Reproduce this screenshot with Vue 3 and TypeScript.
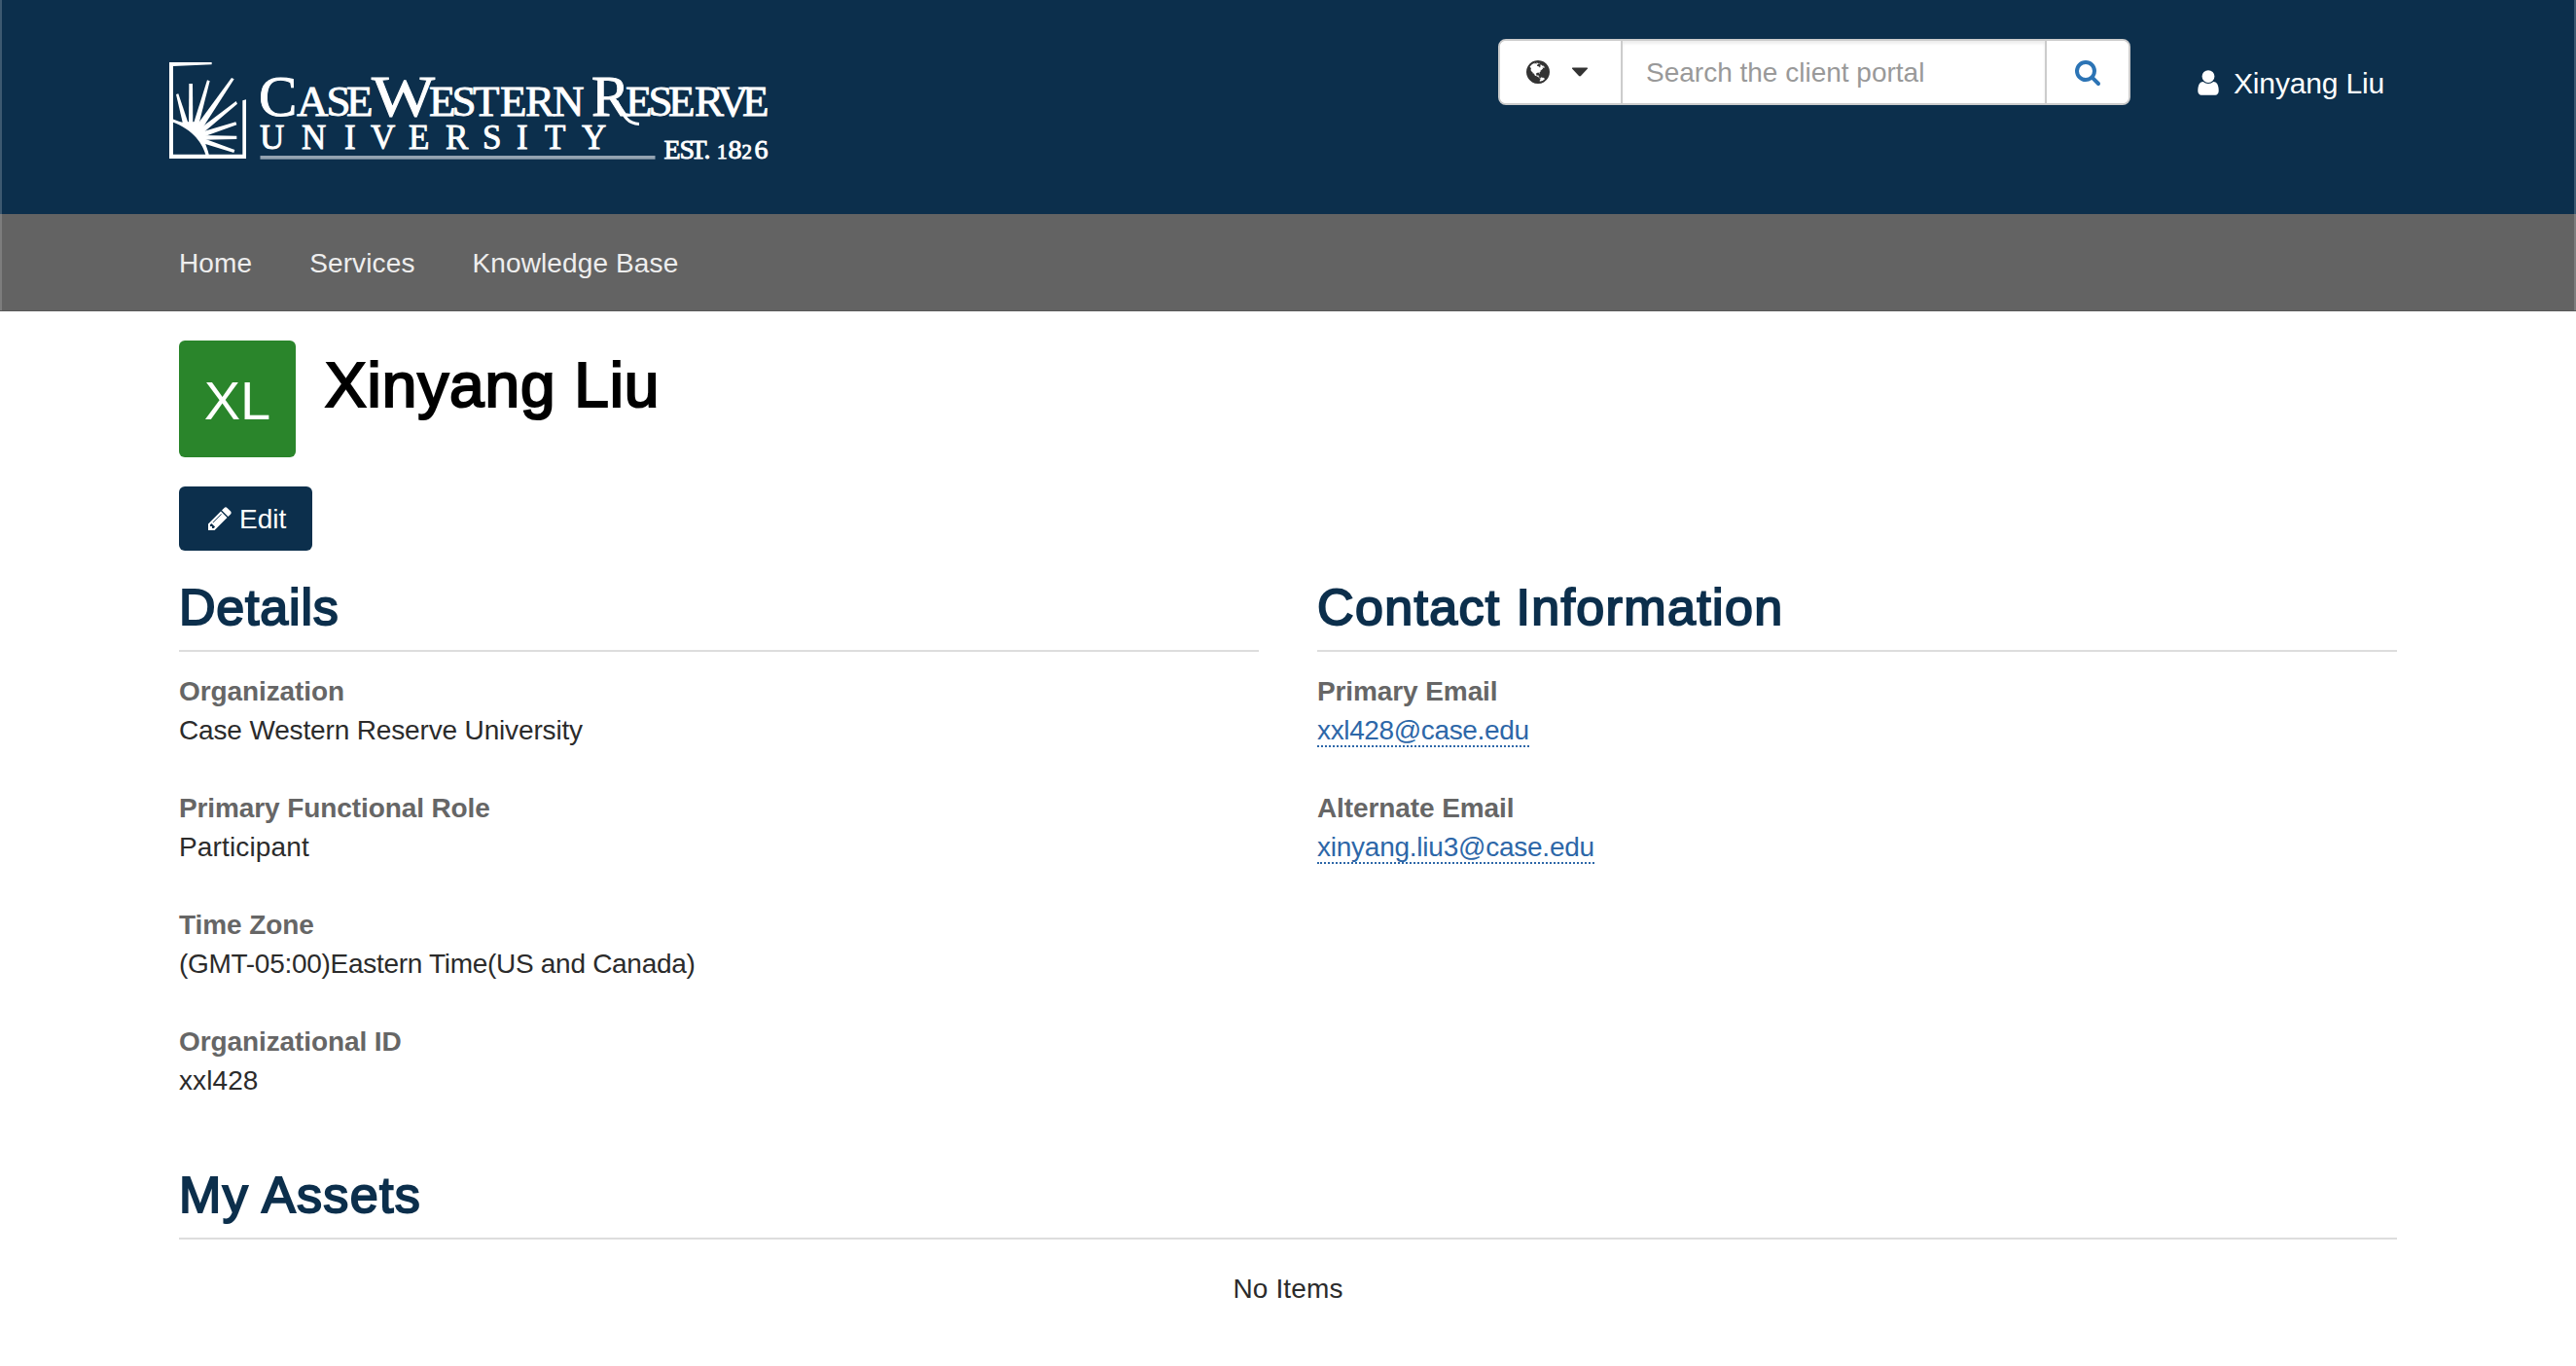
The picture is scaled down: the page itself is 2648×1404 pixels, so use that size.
<script setup lang="ts">
interface Field {
  label: string
  value: string
  spacing?: string
}

const navLinks: string[] = ['Home', 'Services', 'Knowledge Base']

const details: Field[] = [
  { label: 'Organization', value: 'Case Western Reserve University', spacing: '-0.15px' },
  { label: 'Primary Functional Role', value: 'Participant', spacing: '0.15px' },
  { label: 'Time Zone', value: '(GMT-05:00)Eastern Time(US and Canada)', spacing: '-0.29px' },
  { label: 'Organizational ID', value: 'xxl428', spacing: '0.1px' },
]

const contacts: Field[] = [
  { label: 'Primary Email', value: 'xxl428@case.edu', spacing: '-0.36px' },
  { label: 'Alternate Email', value: 'xinyang.liu3@case.edu', spacing: '-0.24px' },
]
</script>

<template>
  <div class="page">
    <header class="masthead">
      <svg class="logo" width="620" height="108" viewBox="0 0 620 108" aria-label="Case Western Reserve University">
        <g transform="translate(-14 -14) scale(0.33333)" fill="#fff">
          <path d="M42 42 L173 42 L173 49 L54 54 L54 326 L268 326 L268 160 L279 157 L279 339 L42 339 Z" />
          <path d="M63 141 L70 139 L104 240 L86 240 Z" />
          <path d="M103 108 L114 108 L115 245 L102 245 Z" />
          <path d="M159 97 L167 100 L130 245 L114 240 Z" />
          <path d="M234 90 L242 94 L140 252 L124 240 Z" />
          <path d="M248 162 L252 170 L144 262 L132 250 Z" />
          <path d="M247 226 L250 235 L146 272 L138 258 Z" />
          <path d="M250 269 L250 279 L146 281 L144 267 Z" />
          <path d="M244 312 L241 321 L146 292 L146 276 Z" />
          <path d="M50 216 C72 224 84 230 92 226 L124 226 L144 250 L150 282 C155 300 162 314 165 330 L155 330 C146 296 118 250 50 226 Z" />
        </g>
        <g class="wordmark" transform="translate(-174 -64)">
          <text class="small" y="119.300"><tspan class="cap" x="266">C</tspan><tspan x="305 335.500 356">ASE</tspan><tspan class="cap" x="382" textLength="65" lengthAdjust="spacingAndGlyphs">W</tspan><tspan x="441 464.500 486 514 540 568">ESTERN</tspan><tspan class="cap" x="608">R</tspan><tspan x="643 666.500 687 714 737 763">ESERVE</tspan></text>
          <path d="M634 104 C641 118 644 127 657 127.500" fill="none" stroke="#fff" stroke-width="3.200" />
          <text class="uni" y="152.500" x="267 310 354 381 420 458 496 531 560 598">UNIVERSITY</text>
          <rect x="267.500" y="160" width="406" height="3.700" fill="#94a3b1" />
          <text class="est" y="163"><tspan x="682.500 698.500 709.500 723.500">EST.</tspan><tspan class="tiny" x="737">1</tspan><tspan x="748.500">8</tspan><tspan class="tiny" x="762.500">2</tspan><tspan x="775.500">6</tspan></text>
        </g>
      </svg>

      <div class="tools">
        <form class="search" @submit.prevent>
          <button class="scope" type="button" aria-label="Search scope">
            <svg width="28" height="28" viewBox="0 0 1792 1792" fill="#333">
              <path d="M896 128q209 0 385.500 103t279.500 279.500 103 385.500-103 385.500-279.500 279.500-385.500 103-385.500-103-279.500-279.500-103-385.500 103-385.500 279.500-279.500 385.500-103zm274 521q-2 1-9.500 9.500t-13.500 9.500q2 0 4.500-5t5-11 3.500-7q6-7 22-15 14-6 52-12 34-8 51 11-2-2 9.500-13t14.500-12q3-2 15-4.500t15-7.500l2-22q-12 1-17.500-7t-6.500-21q0 2-6 8 0-7-4.500-8t-11.500 1-9 1q-10-3-15-7.500t-8-16.500-4-15q-2-5-9.500-11t-9.500-10q-1-2-2.500-5.500t-3-6.500-4-5.500-5.500-2.500-7 5-7.500 10-4.500 5q-3-2-6-1.500t-4.500 1-4.500 3-5 3.500q-3 2-8.500 3t-8.500 2q15-5-1-11-10-4-16-3 9-4 7.500-12t-8.500-14h5q-1-4-8.500-8.500t-17.500-8.500-13-6q-8-5-34-9.500t-33-.5q-5 6-4.500 10.500t4 14 3.500 12.500q1 6-5.500 13t-6.500 12q0 7 14 15.500t10 21.500q-3 8-16 16t-16 12q-5 8-1.500 18.500t10.500 16.500q2 2 1.500 4t-3.500 4.500-5.500 4-6.500 3.500l-3 2q-11 5-20.500-6t-13.500-26q-7-25-16-30-23-8-29 1-5-13-41-26-25-9-58-4 6-1 0-15-7-15-19-12 3-6 4-17.500t1-13.500q3-13 12-23 1-1 7-8.500t9.500-13.500.5-6q35 4 50-11 5-5 11.500-17t10.500-17q9-6 14-5.500t14.500 5.500 14.500 5q14 1 15.500-11t-7.500-20q12 1 3-17-4-7-8-9-12-4-27 5-8 4 2 8-1-1-9.500 10.500t-16.500 17.500-16-5q-1-1-5.500-13.500t-9.500-13.500q-8 0-16 15 3-8-11-15t-24-8q19-12-8-27-7-4-20.500-5t-19.500 4q-5 7-5.500 11.500t5 8 10.500 5.500 11.500 4 8.500 3q14 10 8 14-2 1-8.500 3.500t-11.500 4.500-6 4q-3 4 0 14t-2 14q-5-5-9-17.500t-7-16.500q7 9-25 6l-10-1q-4 0-16 2t-20.500 1-13.500-8q-4-8 0-20 1-4 4-2-4-3-11-9.500t-10-8.500q-46 15-94 41 6 1 12-1 5-2 13-6.500t10-5.500q34-14 42-7l5-5q14 16 20 25-7-4-30-1-20 6-22 12 7 12 5 18-4-3-11.500-10t-14.500-11-15-5q-16 0-22 1-146 80-235 222 7 7 12 8 4 1 5 9t2.500 11 11.500-3q9 8 3 19 1-1 44 27 19 17 21 21 3 11-10 18-1-2-9-9t-9-4q-3 5 .5 18.500t10.500 12.500q-7 0-9.500 16t-2.500 35.500-1 23.500l2 1q-3 12 5.500 34.500t21.500 19.500q-13 3 20 43 6 8 8 9 3 2 12 7.500t15 10 10 10.500q4 5 10 22.500t14 23.500q-2 6 9.500 20t10.500 23q-1 0-2.500 1t-2.500 1q3 7 15.500 14t15.500 13q1 3 2 10t3 11 8 2q2-20-24-62-15-25-17-29-3-5-5.500-15.500t-4.500-14.500q2 0 6 1.500t8.500 3.500 7.500 4 2 3q-3 7 2 17.500t12 18.500 17 19 12 13q6 6 14 19.500t0 13.500q9 0 20 10.500t17 19.500q5 8 8 26t5 24q2 7 8.500 13.500t12.500 9.500l16 8 13 7q5 2 18.500 10.500t21.500 11.500q10 4 16 4t14.500-2.500 13.500-3.500q15-2 29 15t21 21q36 19 55 11-2 1 .5 7.500t8 15.500 9 14.500 5.500 8.500q5 6 18 15t18 15q6-4 7-9-3 8 7 20t18 10q14-3 14-32-31 15-49-18 0-1-2.500-5.500t-4-8.500-2.500-8.500 0-7.500 5-3q9 0 10-3.500t-2-12.500-4-13q-1-8-11-20t-12-15q-5 9-16 8t-16-9q0 1-1.500 5.500t-1.500 6.500q-13 0-15-1 1-3 2.500-17.500t3.500-22.500q1-4 5.500-12t7.500-14.500 4-12.500-4.500-9.500-17.500-2.500q-19 1-26 20-1 3-3 10.500t-5 11.500-9 7q-7 3-24 2t-24-5q-13-8-22.500-29t-9.500-37q0-10 2.500-26.500t3-25-5.500-24.500q3-2 9-9.500t10-10.500q2-1 4.500-1.500t4.500 0 4-1.500 3-6q-1-1-4-3-3-3-4-3 7 3 28.500-1.500t27.500 1.500q15 11 22-2 0-1-2.500-9.500t-.5-13.500q5 27 29 9 3 3 15.500 5t17.500 5q3 2 7 5.500t5.500 4.500 5-.5 8.500-6.500q10 14 12 24 11 40 19 44 7 3 11 2t4.500-9.500 0-14-1.500-12.500l-1-8v-18l-1-8q-15-3-18.500-12t1.500-18.500 15-18.500q1-1 8-3.500t15.500-6.500 12.500-8q21-19 15-35 7 0 11-9-1 0-5-3t-7.500-5-4.500-2q9-5 2-16 5-3 7.500-11t7.500-10q9 12 21 2 7-8 1-16 5-7 20.500-10.500t18.500-9.500q7 2 8-2t1-12 3-12q4-5 15-9t13-5l17-11q3-4 0-4 18 2 31-11 10-11-6-20 3-6-3-9.500t-15-5.500q3-1 11.500-.5t10.500-1.500q15-10-7-16-17-5-43 12zm-163 877q206-36 351-189-3-3-12.500-4.500t-12.500-3.500q-18-7-24-8 1-7-2.500-13t-8-9-12.500-8-11-7q-2-2-7-6t-7-5.500-7.500-4.500-8.500-2-10 1l-3 1q-3 1-5.500 2.500t-5.500 3-4 3 0 2.500q-21-17-36-22-5-1-11-5.500t-10.500-7-10-1.500-11.500 7q-5 5-6 15t-2 13q-7-5 0-17.500t2-18.500q-3-6-10.500-4.500t-12 4.500-11.500 8.500-9 6.500-8.500 5.500-8.500 7.500q-3 4-6 12t-5 11q-2-4-11.500-6.500t-9.500-5.500q2 10 4 35t5 38q7 31-12 48-27 25-29 40-4 22 12 26 0 7-8 20.500t-7 21.500q0 6 2 16z" />
            </svg>
            <svg class="caret" width="18" height="10" viewBox="0 0 18 10" fill="#333">
              <path d="M1.500 .5 H16.500 Q17.600 .7 16.800 1.800 L10 9 Q9 9.800 8 9 L1.200 1.800 Q.4 .7 1.500 .5 Z" />
            </svg>
          </button>
          <input class="query" type="text" placeholder="Search the client portal" />
          <button class="go" type="submit" aria-label="Search">
            <svg width="28" height="28" viewBox="0 0 1792 1792" fill="#2c74b5">
              <path d="M1216 832q0-185-131.500-316.500t-316.500-131.500-316.500 131.500-131.500 316.500 131.500 316.500 316.500 131.500 316.500-131.500 131.500-316.500zm512 832q0 52-38 90t-90 38q-54 0-90-38l-343-342q-179 124-399 124-143 0-273.500-55.500t-225-150-150-225-55.500-273.500 55.500-273.500 150-225 225-150 273.500-55.500 273.500 55.500 225 150 150 225 55.500 273.500q0 220-124 399l343 343q37 37 37 90z" />
            </svg>
          </button>
        </form>
        <a class="user">
          <svg width="30" height="30" viewBox="0 0 1792 1792" fill="#fff">
            <path d="M1536 1399q0 109-62.500 187t-150.500 78h-854q-88 0-150.500-78t-62.500-187q0-85 8.500-160.500t31.500-152 58.500-131 94-89 134.500-34.500q131 128 313 128t313-128q76 0 134.500 34.500t94 89 58.500 131 31.500 152 8.500 160.500zm-256-887q0 159-112.500 271.500t-271.500 112.500-271.500-112.500-112.500-271.500 112.500-271.500 271.500-112.500 271.500 112.500 112.500 271.500z" />
          </svg>
          <span>Xinyang Liu</span>
        </a>
      </div>
    </header>

    <nav class="nav">
      <a v-for="link in navLinks" :key="link">{{ link }}</a>
    </nav>

    <main class="content">
      <div class="profile">
        <div class="avatar">XL</div>
        <h1>Xinyang Liu</h1>
      </div>
      <button class="edit" type="button">
        <svg width="28" height="28" viewBox="0 0 1792 1792" fill="#fff">
          <path d="M491 1536l91-91-235-235-91 91v107h128v128h107zm523-928q0-22-22-22-10 0-17 7l-542 542q-7 7-7 17 0 22 22 22 10 0 17-7l542-542q7-7 7-17zm-54-192l416 416-832 832h-416v-416zm683 96q0 53-37 90l-166 166-416-416 166-165q36-38 90-38 53 0 91 38l235 234q37 39 37 91z" />
        </svg>
        <span>Edit</span>
      </button>

      <div class="columns">
        <section>
          <h2 class="tight">Details</h2>
          <dl>
            <div v-for="f in details" :key="f.label" class="field">
              <dt>{{ f.label }}</dt>
              <dd :style="{ letterSpacing: f.spacing }">{{ f.value }}</dd>
            </div>
          </dl>
        </section>
        <section>
          <h2>Contact Information</h2>
          <dl>
            <div v-for="f in contacts" :key="f.label" class="field">
              <dt>{{ f.label }}</dt>
              <dd><a class="mail" :style="{ letterSpacing: f.spacing }">{{ f.value }}</a></dd>
            </div>
          </dl>
        </section>
      </div>

      <section class="assets">
        <h2>My Assets</h2>
        <p>No Items</p>
      </section>
    </main>
  </div>
</template>

<style>
body {
  margin: 0;
  background: #fff;
}
</style>

<style scoped>
.page {
  height: 1404px;
  overflow: hidden;
  background: #fff;
  color: #2b2b2b;
  font: 28px/40px "Liberation Sans", Arial, sans-serif;
}

.page * {
  box-sizing: border-box;
}

.masthead {
  display: flex;
  justify-content: space-between;
  align-items: flex-start;
  height: 220px;
  padding: 0 184px 0 174px;
  background: #0c2f4c;
  box-shadow: inset -2px 0 #3d5970, inset 2px 0 #3d5970;
}

.logo {
  display: block;
  margin-top: 64px;
  overflow: visible;
}

.wordmark {
  fill: #fff;
  font-family: "Liberation Serif", serif;
}

.wordmark text {
  stroke: #fff;
  stroke-width: 0.9px;
}

.wordmark .small {
  font-size: 45px;
}

.wordmark .cap {
  font-size: 59px;
}

.wordmark .uni {
  font-size: 35px;
}

.wordmark .est {
  font-size: 28px;
}

.wordmark .tiny {
  font-size: 21px;
}

.tools {
  display: flex;
  padding-top: 40px;
}

.search {
  display: flex;
  width: 650px;
  height: 68px;
  overflow: hidden;
  border: 2px solid #ccc;
  border-radius: 8px;
  background: #fff;
}

.search button {
  display: flex;
  align-items: center;
  padding: 0;
  border: 0;
  background: #fff;
}

.search .scope {
  width: 126px;
  flex: none;
  border-right: 2px solid #ccc;
  padding-left: 25px;
}

.caret {
  margin-left: 20px;
}

.query {
  flex: 1;
  min-width: 0;
  padding: 2px 24px 0;
  border: 0;
  outline: 0;
  background: #fff;
  box-shadow: inset 0 3px 3px rgba(0, 0, 0, 0.07);
  font: inherit;
}

.query::placeholder {
  color: #999;
  opacity: 1;
}

.search .go {
  width: 86px;
  flex: none;
  justify-content: center;
  border-left: 2px solid #ccc;
}

.user {
  display: flex;
  gap: 11px;
  width: 274px;
  padding: 26px 0 0 65px;
  color: #fff;
  font-size: 30px;
  letter-spacing: -0.15px;
  white-space: nowrap;
}

.user svg {
  margin-top: 4px;
}

.nav {
  display: flex;
  gap: 59px;
  height: 100px;
  padding: 31px 184px 0;
  border-bottom: 1px solid #5a5a5a;
  background: #636363;
  box-shadow: inset -2px 0 #7d7d7d, inset 2px 0 #7d7d7d;
  color: #eee;
  letter-spacing: 0.12px;
}

.content {
  padding: 30px 184px 0;
}

.profile {
  display: flex;
  gap: 30px;
}

.avatar {
  width: 120px;
  height: 120px;
  border-radius: 6px;
  background: #2a852b;
  color: #fff;
  font-size: 56px;
  line-height: 124px;
  text-align: center;
}

h1,
h2,
dl,
dd,
p {
  margin: 0;
}

h1 {
  padding-top: 10px;
  color: #000;
  font-size: 64px;
  font-weight: 400;
  line-height: 72px;
  letter-spacing: 0.9px;
  -webkit-text-stroke: 2.2px #000;
}

.edit {
  display: flex;
  align-items: center;
  gap: 6px;
  width: 137px;
  height: 66px;
  margin-top: 30px;
  padding: 0 0 0 28px;
  border: 0;
  border-radius: 6px;
  background: #0c2f4c;
  color: #fff;
  font: inherit;
}

.edit span {
  padding-top: 2px;
}

.columns {
  display: grid;
  grid-template-columns: 1fr 1fr;
  gap: 60px;
}

h2 {
  height: 104px;
  padding-top: 28px;
  border-bottom: 2px solid #ddd;
  color: #0c2f4c;
  font-size: 52px;
  font-weight: 400;
  line-height: 60px;
  letter-spacing: 1.35px;
  -webkit-text-stroke: 2px #0c2f4c;
}

h2.tight {
  letter-spacing: 0.8px;
}

dl {
  height: 500px;
  padding-top: 21px;
}

.field {
  height: 120px;
}

dt {
  color: #666;
  font-weight: 700;
  letter-spacing: -0.1px;
}

.mail {
  border-bottom: 2px dotted #2d67a8;
  color: #2d67a8;
}

.assets p {
  padding-top: 31px;
  letter-spacing: 0.15px;
  text-align: center;
}
</style>
